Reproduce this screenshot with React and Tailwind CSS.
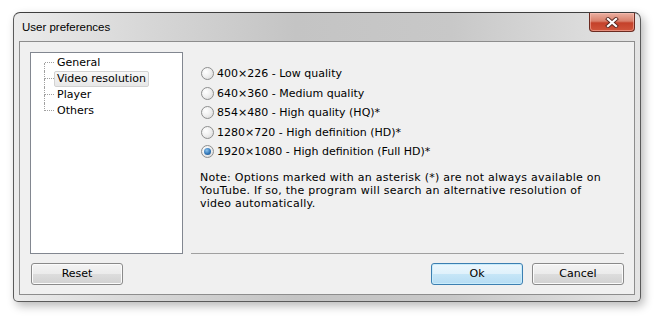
const resolutions = [
  "400×226 - Low quality",
  "640×360 - Medium quality",
  "854×480 - High quality (HQ)*",
  "1280×720 - High definition (HD)*",
  "1920×1080 - High definition (Full HD)*",
];

const sections = ["General", "Video resolution", "Player", "Others"];

function Radio({ checked }) {
  return (
    <span className="flex h-[13px] w-[13px] shrink-0 items-center justify-center rounded-full border border-[#8e8f8f] bg-[radial-gradient(circle_at_35%_35%,#ffffff,#f0f0f0_45%,#d4d4d4)]">
      {checked && (
        <span className="h-[7px] w-[7px] rounded-full bg-[radial-gradient(circle_at_40%_35%,#8cc4ee,#3377b8_55%,#1a4a78)]" />
      )}
    </span>
  );
}

function Button({ children, primary }) {
  return (
    <button
      className={
        primary
          ? "h-[22px] w-[92px] rounded-[3px] border border-[#3c7fb1] bg-[linear-gradient(to_bottom,#ecf7fd_0%,#dff1fb_50%,#c6e6f7_51%,#b6dcf3_100%)] text-[11px] text-black shadow-[inset_0_0_0_1px_#c9ecfb]"
          : "h-[22px] w-[92px] rounded-[3px] border border-[#8a8a8a] bg-[linear-gradient(to_bottom,#f4f4f4_0%,#ebebeb_50%,#dddddd_51%,#d1d1d1_100%)] text-[11px] text-black shadow-[inset_0_0_0_1px_#fbfbfb]"
      }
      style={{ fontFamily: '"DejaVu Sans", Verdana, sans-serif' }}
    >
      {children}
    </button>
  );
}

export default function App() {
  return (
    <div className="h-[322px] w-[659px] bg-white pl-[13px] pt-[12px]">
      <div className="h-[290px] w-[628px] rounded-t-[7px] rounded-b-[5px] border border-[#5a5a5a] border-t-[#3e3e3e] bg-[linear-gradient(to_right,#ebebeb,#d6d6d6_22%,#c4c4c4_45%,#c8c8c8_70%,#e4e4e4)] shadow-[3px_4px_10px_rgba(0,0,0,0.28)]">
        {/* Title bar */}
        <div className="flex h-[28px] items-start justify-between">
          <span
            className="pl-[8px] pt-[7px] text-[11.5px] leading-[14px] text-black"
            style={{ fontFamily: '"Liberation Sans", Arial, sans-serif' }}
          >
            User preferences
          </span>
          <div className="mr-[5px] flex h-[19px] w-[46px] items-center justify-center rounded-b-[4px] border border-t-0 border-[#6b2a20] bg-[linear-gradient(to_bottom,#eab0a2_0%,#d9806b_45%,#c4412a_55%,#d0553b_100%)] shadow-[inset_0_0_0_1px_rgba(255,200,190,0.5)]">
            <svg width="14" height="11" viewBox="0 0 14 11">
              <path d="M3 2 L11 9 M11 2 L3 9" stroke="#5a2a22" strokeWidth="4" strokeLinecap="square" />
              <path d="M3 2 L11 9 M11 2 L3 9" stroke="#ffffff" strokeWidth="2.2" strokeLinecap="square" />
            </svg>
          </div>
        </div>

        {/* Client area */}
        <div
          className="mx-[5px] h-[254px] border border-[#8d8d8d] bg-[#f0f0f0] p-[10px] pb-[9px] text-[11px] text-black"
          style={{ fontFamily: '"DejaVu Sans", Verdana, sans-serif' }}
        >
          <div className="flex h-[202px]">
            {/* Tree */}
            <div className="h-full w-[153px] shrink-0 border border-[#828790] bg-white pl-[13px] pt-[2px]">
              {sections.map((s, i) => (
                <div key={s} className="flex h-[16px]">
                  <div className="flex w-[10px] flex-col">
                    <div
                      className={
                        i > 0
                          ? "h-[8px] border-b border-l border-dotted border-[#a0a0a0]"
                          : "ml-[1px] h-[8px] border-b border-dotted border-[#a0a0a0]"
                      }
                    />
                    <div
                      className={
                        i < sections.length - 1
                          ? "h-[8px] border-l border-dotted border-[#a0a0a0]"
                          : "h-[8px]"
                      }
                    />
                  </div>
                  <span
                    className={
                      s === "Video resolution"
                        ? "h-[16px] rounded-[2px] border border-[#d2d2d2] bg-[linear-gradient(to_bottom,#f7f7f7,#e7e7e7)] px-[2px] leading-[14px]"
                        : "h-[16px] border border-transparent px-[2px] leading-[14px]"
                    }
                  >
                    {s}
                  </span>
                </div>
              ))}
            </div>

            {/* Options pane */}
            <div className="ml-[8px] flex-1 border-b border-[#a0a0a0] pl-[10px] pr-[10px] pt-[12px]">
              {resolutions.map((r, i) => (
                <div key={r} className="flex h-[19.5px] items-center gap-[3px]">
                  <Radio checked={i === resolutions.length - 1} />
                  <span className="leading-[13px]">{r}</span>
                </div>
              ))}
              <p className="-ml-[1px] mt-[9px] whitespace-nowrap leading-[13.3px] tracking-[0.25px]">
                Note: Options marked with an asterisk (*) are not always available on
                <br />
                YouTube. If so, the program will search an alternative resolution of
                <br />
                video automatically.
              </p>
            </div>
          </div>

          {/* Buttons */}
          <div className="mt-[9px] flex items-center justify-between pl-[1px]">
            <Button>Reset</Button>
            <div className="flex gap-[9px]">
              <Button primary>Ok</Button>
              <Button>Cancel</Button>
            </div>
          </div>
        </div>
      </div>
    </div>
  );
}
